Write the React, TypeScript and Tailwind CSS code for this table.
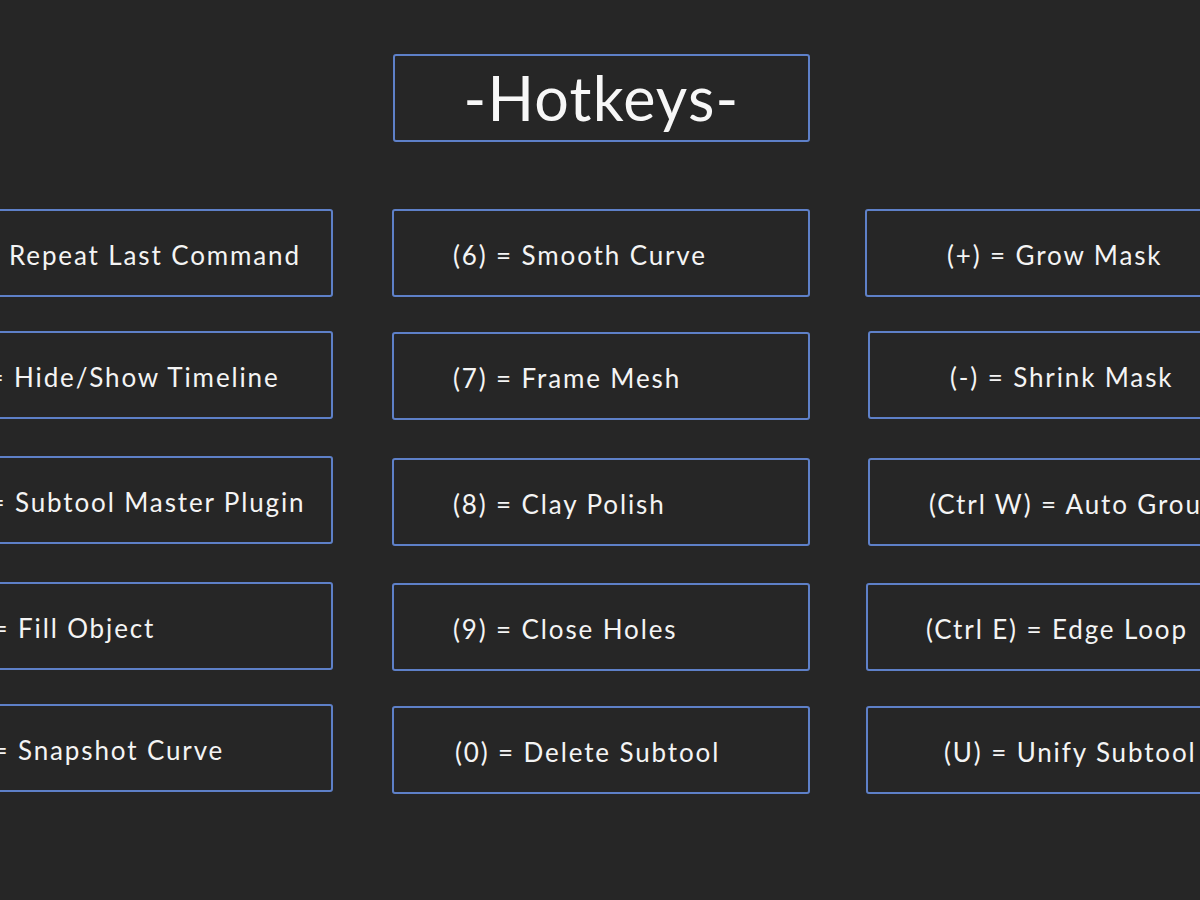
type Key = {
  text: string;
  pre?: string;
  preW?: number;
  pl?: number;
  mt: number;
  dx?: number;
};

// Left column sits partly off the slide, so its prefix is right-aligned
const leftKeys: Key[] = [
  { pre: "(1) = ", preW: 92, text: "Repeat Last Command", mt: 0 },
  { pre: "(2) = ", preW: 97, text: "Hide/Show Timeline", mt: 34 },
  { pre: "(3) = ", preW: 98, text: "Subtool Master Plugin", mt: 37 },
  { pre: "(4) = ", preW: 101, text: "Fill Object", mt: 38 },
  { pre: "(5) = ", preW: 101, text: "Snapshot Curve", mt: 34 },
];

const midKeys: Key[] = [
  { text: "(6) = Smooth Curve", pl: 59, mt: 0 },
  { text: "(7) = Frame Mesh", pl: 59, mt: 35 },
  { text: "(8) = Clay Polish", pl: 59, mt: 38 },
  { text: "(9) = Close Holes", pl: 59, mt: 37 },
  { text: "(0) = Delete Subtool", pl: 61, mt: 35 },
];

const rightKeys: Key[] = [
  { text: "(+) = Grow Mask", pl: 80, mt: 0, dx: 0 },
  { text: "(-) = Shrink Mask", pl: 80, mt: 34, dx: 3 },
  { text: "(Ctrl W) = Auto Group", pl: 59, mt: 39, dx: 3 },
  { text: "(Ctrl E) = Edge Loop", pl: 58, mt: 37, dx: 1 },
  { text: "(U) = Unify Subtool", pl: 76, mt: 35, dx: 1 },
];

const HotkeyBox = ({ k }: { k: Key }) => (
  <div
    className="flex h-[88px] w-[418px] shrink-0 items-center whitespace-nowrap rounded-[3px] border-2 border-[#5e80c8] pt-[5px] text-[26px] tracking-[0.072em] text-[#f4f4f4]"
    style={{ marginTop: k.mt, marginLeft: k.dx ?? 0, paddingLeft: k.pl ?? 0 }}
  >
    {k.pre && (
      <span className="shrink-0 whitespace-pre text-right" style={{ width: k.preW }}>
        {k.pre}
      </span>
    )}
    <span>{k.text}</span>
  </div>
);

export default function App() {
  return (
    <div
      className="flex h-[900px] w-[1200px] flex-col overflow-hidden bg-[#262626]"
      style={{ fontFamily: "Lato, 'Noto Sans', sans-serif" }}
    >
      {/* Title */}
      <div className="ml-[393px] mt-[54px] flex h-[88px] w-[417px] items-center justify-center rounded-[3px] border-2 border-[#5e80c8] text-[61px] tracking-[0.02em] text-[#f7f7f7]">
        -Hotkeys-
      </div>

      {/* Columns */}
      <div className="ml-[-85px] mt-[67px] flex gap-[59px]">
        <div className="flex flex-col">
          {leftKeys.map((k) => (
            <HotkeyBox key={k.text} k={k} />
          ))}
        </div>
        <div className="flex flex-col">
          {midKeys.map((k) => (
            <HotkeyBox key={k.text} k={k} />
          ))}
        </div>
        <div className="ml-[-4px] flex flex-col">
          {rightKeys.map((k) => (
            <HotkeyBox key={k.text} k={k} />
          ))}
        </div>
      </div>
    </div>
  );
}
